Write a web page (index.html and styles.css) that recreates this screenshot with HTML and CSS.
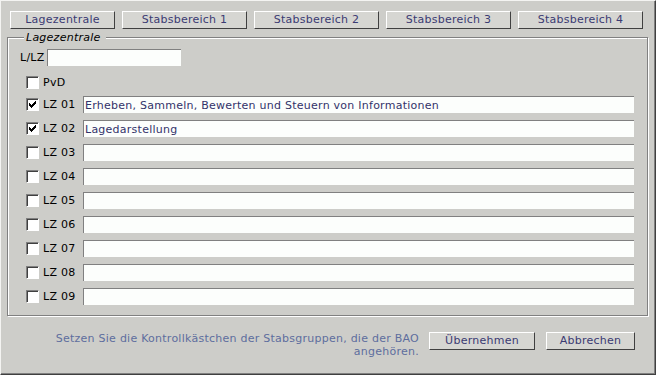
FILE: index.html
```html
<!DOCTYPE html>
<html lang="de">
<head>
    <meta charset="UTF-8">
    <meta name="viewport" content="width=device-width, initial-scale=1.0">
    <title>Lagezentrale</title>
    <link rel="stylesheet" href="styles.css">
</head>
<body>
    <div class="window">
        <div class="tabs">
            <button class="tab first">Lagezentrale</button>
            <button class="tab">Stabsbereich 1</button>
            <button class="tab">Stabsbereich 2</button>
            <button class="tab">Stabsbereich 3</button>
            <button class="tab">Stabsbereich 4</button>
        </div>
        <fieldset class="group">
            <legend>Lagezentrale</legend>
            <div class="lz-row">
                <label>L/LZ</label>
                <input class="field small" type="text">
            </div>
            <div class="check-row pvd">
                <span class="box"></span>
                <span class="name">PvD</span>
            </div>
            <div class="check-row">
                <span class="box"><svg width="11" height="11" viewBox="0 0 11 11"><path d="M8 2h1v1h-1zM7 3h2v1h-2zM2 4h1v1h-1zM6 4h3v1h-3zM2 5h2v1h-2zM5 5h3v1h-3zM2 6h5v1h-5zM3 7h3v1h-3zM4 8h1v1h-1z" fill="#000"/></svg></span>
                <span class="name">LZ 01</span>
                <input class="field" type="text" value="Erheben, Sammeln, Bewerten und Steuern von Informationen">
            </div>
            <div class="check-row">
                <span class="box"><svg width="11" height="11" viewBox="0 0 11 11"><path d="M8 2h1v1h-1zM7 3h2v1h-2zM2 4h1v1h-1zM6 4h3v1h-3zM2 5h2v1h-2zM5 5h3v1h-3zM2 6h5v1h-5zM3 7h3v1h-3zM4 8h1v1h-1z" fill="#000"/></svg></span>
                <span class="name">LZ 02</span>
                <input class="field" type="text" value="Lagedarstellung">
            </div>
            <div class="check-row">
                <span class="box"></span>
                <span class="name">LZ 03</span>
                <input class="field" type="text">
            </div>
            <div class="check-row">
                <span class="box"></span>
                <span class="name">LZ 04</span>
                <input class="field" type="text">
            </div>
            <div class="check-row">
                <span class="box"></span>
                <span class="name">LZ 05</span>
                <input class="field" type="text">
            </div>
            <div class="check-row">
                <span class="box"></span>
                <span class="name">LZ 06</span>
                <input class="field" type="text">
            </div>
            <div class="check-row">
                <span class="box"></span>
                <span class="name">LZ 07</span>
                <input class="field" type="text">
            </div>
            <div class="check-row">
                <span class="box"></span>
                <span class="name">LZ 08</span>
                <input class="field" type="text">
            </div>
            <div class="check-row">
                <span class="box"></span>
                <span class="name">LZ 09</span>
                <input class="field" type="text">
            </div>
        </fieldset>
        <div class="footer">
            <div class="hint">Setzen Sie die Kontrollkästchen der Stabsgruppen, die der BAO<br>angehören.</div>
            <button class="btn ok">Übernehmen</button>
            <button class="btn cancel">Abbrechen</button>
        </div>
    </div>
</body>
</html>
```

FILE: styles.css
```css
body {
    margin: 0;
    font-family: "DejaVu Sans", Verdana, sans-serif;
    font-size: 11px;
    letter-spacing: 0.25px;
}

.window {
    width: 656px;
    height: 375px;
    box-sizing: border-box;
    background: #cdcdc9;
    border: 1px solid;
    border-color: #f4f4f2 #404040 #404040 #f4f4f2;
    box-shadow: inset -1px -1px 0 #808080;
    padding: 10px 0 0 6px;
}

.tabs {
    display: flex;
    gap: 7px;
    padding-left: 3px;
}

.tab,
.btn {
    box-sizing: border-box;
    height: 18px;
    margin: 0;
    padding: 0;
    border: 1px solid;
    border-color: #fff #404040 #404040 #fff;
    background: #d6d6d2;
    color: #3b3b73;
    font-family: "DejaVu Sans", Verdana, sans-serif;
    font-size: 11px;
    letter-spacing: 0.25px;
    line-height: 16px;
}

.tab {
    width: 125px;
}

.tab.first {
    width: 105px;
}

.group {
    box-sizing: border-box;
    width: 641px;
    margin: 2px 0 0 0;
    padding: 0 13px 10px 0;
    border: 1px solid #808080;
    box-shadow: inset 1px 1px 0 #fff, 1px 1px 0 #fff;
}

.group legend {
    margin-left: 16px;
    padding: 0 5px 0 2px;
    font-style: italic;
    line-height: 13px;
    color: #000;
    background: #cdcdc9;
}

.lz-row {
    display: flex;
    align-items: center;
    height: 17px;
    margin-top: 5px;
    padding-left: 12px;
}

.lz-row label {
    width: 27px;
}

.field {
    box-sizing: border-box;
    flex: 1;
    height: 17px;
    margin: 0;
    padding: 0 0 0 1px;
    border: 0;
    border-top: 1px solid #808080;
    border-left: 1px solid #808080;
    background: #fcfefc;
    color: #33336a;
    font-family: "DejaVu Sans", Verdana, sans-serif;
    font-size: 11px;
    letter-spacing: 0.25px;
    outline: none;
}

.field.small {
    flex: none;
    width: 134px;
}

.check-row {
    display: flex;
    align-items: center;
    height: 17px;
    margin-top: 7px;
    padding-left: 18px;
}

.check-row.pvd {
    height: 13px;
    margin-top: 10px;
}

.box {
    flex: none;
    width: 13px;
    height: 13px;
    box-sizing: border-box;
    border: 1px solid;
    border-color: #808080 #fff #fff #808080;
    box-shadow: inset 1px 1px 0 #404040;
    background: #fff;
    margin-right: 4px;
}

.box svg {
    display: block;
}

.name {
    width: 40px;
}

.footer {
    display: flex;
    justify-content: flex-end;
    align-items: flex-start;
    padding: 16px 20px 0 0;
}

.hint {
    margin-right: 10px;
    text-align: right;
    line-height: 13px;
    color: #5e6e9e;
    white-space: nowrap;
}

.btn.ok {
    width: 106px;
}

.btn.cancel {
    width: 89px;
    margin-left: 11px;
}
```
